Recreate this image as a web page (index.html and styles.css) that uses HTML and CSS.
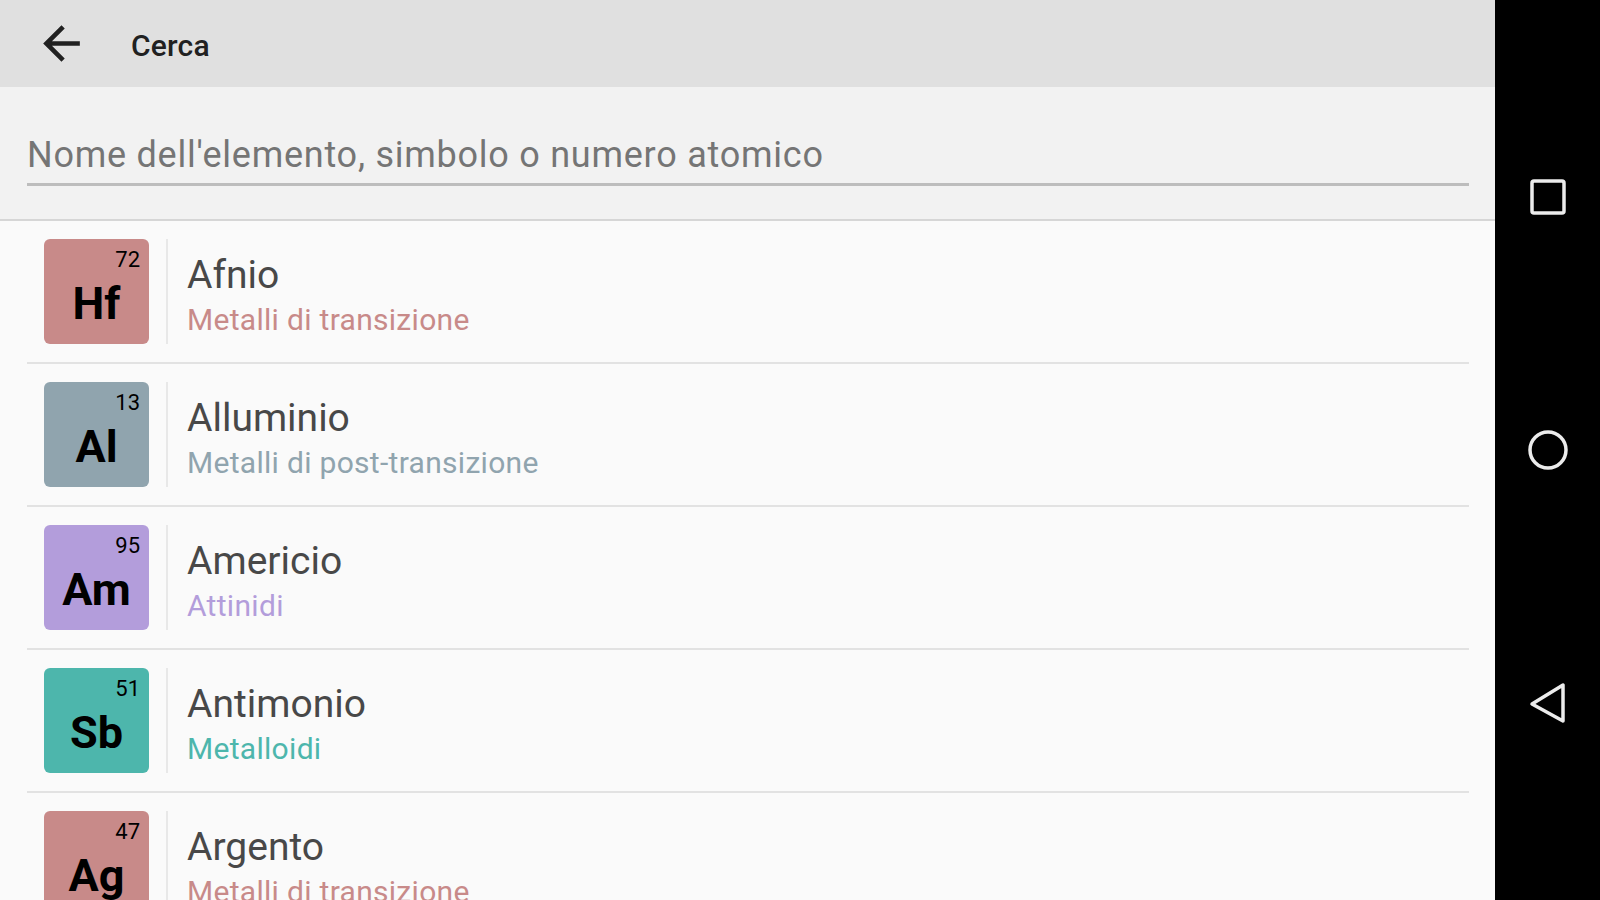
FILE: index.html
```html
<!DOCTYPE html>
<html lang="it">
<head>
  <meta charset="UTF-8" />
  <meta name="viewport" content="width=device-width, initial-scale=1.0" />
  <title>Cerca</title>
  <link rel="stylesheet" href="styles.css">
</head>
<body>
  <div class="screen">
    <header class="toolbar">
      <svg class="back" viewBox="0 0 24 24" width="55" height="55">
        <path d="M20 11H7.83l5.59-5.59L12 4l-8 8 8 8 1.41-1.41L7.83 13H20v-2z" fill="#212121"/>
      </svg>
      <span class="title">Cerca</span>
    </header>

    <div class="search">
      <input type="text" placeholder="Nome dell'elemento, simbolo o numero atomico" />
    </div>

    <ul class="results">
      <li class="row transition">
        <div class="tile"><span class="num">72</span><span class="sym">Hf</span></div>
        <div class="info">
          <span class="name">Afnio</span>
          <span class="cat">Metalli di transizione</span>
        </div>
      </li>
      <li class="row post">
        <div class="tile"><span class="num">13</span><span class="sym">Al</span></div>
        <div class="info">
          <span class="name">Alluminio</span>
          <span class="cat">Metalli di post-transizione</span>
        </div>
      </li>
      <li class="row actinide">
        <div class="tile"><span class="num">95</span><span class="sym">Am</span></div>
        <div class="info">
          <span class="name">Americio</span>
          <span class="cat">Attinidi</span>
        </div>
      </li>
      <li class="row metalloid">
        <div class="tile"><span class="num">51</span><span class="sym">Sb</span></div>
        <div class="info">
          <span class="name">Antimonio</span>
          <span class="cat">Metalloidi</span>
        </div>
      </li>
      <li class="row transition">
        <div class="tile"><span class="num">47</span><span class="sym">Ag</span></div>
        <div class="info">
          <span class="name">Argento</span>
          <span class="cat">Metalli di transizione</span>
        </div>
      </li>
    </ul>
  </div>

  <nav class="navbar">
    <div class="nav-btn">
      <svg viewBox="0 0 40 40" width="40" height="40">
        <rect x="4" y="4" width="32" height="32" rx="2" fill="none" stroke="#ececec" stroke-width="3.5"/>
      </svg>
    </div>
    <div class="nav-btn">
      <svg viewBox="0 0 44 44" width="44" height="44">
        <circle cx="22" cy="22" r="18" fill="none" stroke="#ececec" stroke-width="3.5"/>
      </svg>
    </div>
    <div class="nav-btn">
      <svg viewBox="0 0 40 44" width="40" height="44">
        <path d="M35 4 L35 40 L4 23 Z" fill="none" stroke="#ececec" stroke-width="3.5" stroke-linejoin="round"/>
      </svg>
    </div>
  </nav>
</body>
</html>
```

FILE: styles.css
```css
html, body {
  margin: 0;
  padding: 0;
  height: 100%;
  overflow: hidden;
}
body {
  display: flex;
  font-family: Roboto, "Noto Sans", sans-serif;
  background-color: #fafafa;
}
.screen {
  flex: 1;
  display: flex;
  flex-direction: column;
  min-width: 0;
}
.toolbar {
  height: 87px;
  background-color: #e0e0e0;
  display: flex;
  align-items: center;
  flex-shrink: 0;
}
.back {
  margin-left: 34px;
  margin-top: -1px;
}
.title {
  margin-left: 42px;
  margin-top: 3px;
  font-size: 30px;
  font-weight: 500;
  letter-spacing: 0.2px;
  color: #212121;
}
.search {
  background-color: #f2f2f2;
  padding: 47px 26px 33px 27px;
  border-bottom: 2px solid #d6d6d6;
  flex-shrink: 0;
}
.search input {
  display: block;
  width: 100%;
  box-sizing: border-box;
  height: 52px;
  padding: 0 0 7px;
  margin: 0;
  border: none;
  border-bottom: 3px solid #bdbdbd;
  background: transparent;
  font-family: Roboto, sans-serif;
  font-size: 36px;
  line-height: 42px;
  letter-spacing: 0.75px;
  color: #333;
  outline: none;
}
.search input::placeholder {
  color: #757575;
}
.results {
  list-style: none;
  margin: 0;
  padding: 0;
}
.row {
  display: flex;
  margin: 0 26px 0 27px;
  padding: 18px 0 18px 17px;
  border-bottom: 2px solid #e2e2e2;
}
.tile {
  width: 105px;
  height: 105px;
  border-radius: 6px;
  display: flex;
  flex-direction: column;
  flex-shrink: 0;
  box-sizing: border-box;
  padding: 10px 9px 0;
  color: #000;
}
.num {
  align-self: flex-end;
  font-size: 22px;
  line-height: 22px;
}
.sym {
  align-self: center;
  margin-top: 10px;
  font-size: 45px;
  line-height: 45px;
  font-weight: 700;
}
.info {
  display: flex;
  flex-direction: column;
  margin-left: 17px;
  padding-left: 19px;
  padding-top: 12px;
  border-left: 2px solid #e8e8e8;
}
.name {
  font-size: 39px;
  line-height: 48px;
  color: #484848;
}
.cat {
  font-size: 30px;
  line-height: 41px;
  letter-spacing: 0.3px;
}
.transition .tile { background-color: #c88a89; }
.transition .cat { color: #c88a89; }
.post .tile { background-color: #90a4ae; }
.post .cat { color: #90a4ae; }
.actinide .tile { background-color: #b39ddb; }
.actinide .cat { color: #b39ddb; }
.metalloid .tile { background-color: #4db6ac; }
.metalloid .cat { color: #4db6ac; }
.navbar {
  width: 105px;
  flex-shrink: 0;
  background-color: #000;
  display: flex;
  flex-direction: column;
  align-items: center;
  justify-content: center;
  gap: 193px;
}
.nav-btn {
  height: 60px;
  width: 60px;
  display: flex;
  align-items: center;
  justify-content: center;
}
```
